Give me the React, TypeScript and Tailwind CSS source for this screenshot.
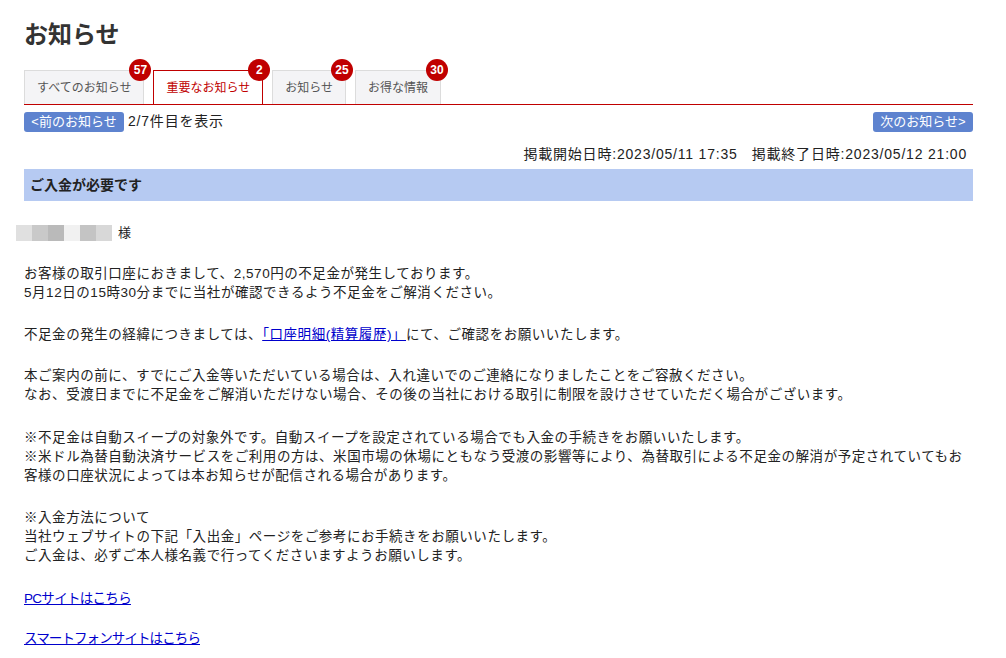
import React from "react";

const font = { fontFamily: "'Liberation Sans','Noto Sans CJK JP',sans-serif" };

function Tab({ label, count, active }: { label: string; count: string; active?: boolean }) {
  return (
    <div
      className={
        "relative h-[34px] flex items-center px-[12px] text-[12px] border border-b-0 " +
        (active
          ? "bg-white border-[#c00000] text-[#c00000]"
          : "bg-[#f4f4f6] border-[#dcdcdc] text-[#555]")
      }
    >
      {label}
      <span className="absolute -top-[12px] -right-[8px] w-[22px] h-[22px] rounded-full bg-[#c00000] text-white text-[12px] font-bold flex items-center justify-center leading-none">
        {count}
      </span>
    </div>
  );
}

export default function App() {
  const blocks = ["#e0e0e0", "#c9c9c9", "#bababa", "#f1f1f1", "#c4c4c4", "#d8d8d8"];
  return (
    <div className="w-[1006px] h-[658px] bg-white text-[#222] overflow-hidden" style={font}>
      <div className="mx-[24px] w-[949px]">
        <div className="h-[58px] pt-[19px]">
          <h1 className="text-[24px] leading-[32px] font-bold text-[#333]">お知らせ</h1>
        </div>
        <div className="pt-[12px] flex items-end gap-[9px] border-b border-[#c00000]">
          <Tab label="すべてのお知らせ" count="57" />
          <Tab label="重要なお知らせ" count="2" active />
          <Tab label="お知らせ" count="25" />
          <Tab label="お得な情報" count="30" />
        </div>
        <div className="mt-[6px] flex items-center justify-between">
          <div className="flex items-center gap-[4px]">
            <span className="h-[20px] w-[100px] text-center rounded-[3px] bg-[#5e83cf] text-white text-[13px] leading-[20px]">
              &lt;前のお知らせ
            </span>
            <span className="text-[14px] tracking-[0.8px]">2/7件目を表示</span>
          </div>
          <span className="h-[20px] w-[100px] text-center rounded-[3px] bg-[#5e83cf] text-white text-[13px] leading-[20px]">
            次のお知らせ&gt;
          </span>
        </div>
        <div className="mt-[12px] h-[20px] leading-[20px] text-[14px] tracking-[0.8px] text-right pr-[6px]">
          掲載開始日時:2023/05/11 17:35&nbsp;&nbsp;&nbsp;掲載終了日時:2023/05/12 21:00
        </div>
        <div className="mt-[5px] h-[32px] bg-[#b6caf2] flex items-center pl-[6px] text-[14px] font-bold text-[#222]">
          ご入金が必要です
        </div>
        <div className="mt-[24px] -ml-[8px] flex items-center h-[16px]">
          {blocks.map((c, i) => (
            <span key={i} className="w-[16px] h-[16px]" style={{ backgroundColor: c }} />
          ))}
          <span className="ml-[6px] text-[13px]">様</span>
        </div>
        <div className="mt-[23px] text-[13.5px] leading-[19px] tracking-[0.55px]">
          <p>
            お客様の取引口座におきまして、2,570円の不足金が発生しております。
            <br />
            5月12日の15時30分までに当社が確認できるよう不足金をご解消ください。
          </p>
          <p className="mt-[23px]">
            不足金の発生の経緯につきましては、
            <a className="text-[#0000cc] underline" href="#">
              「口座明細(精算履歴)」
            </a>
            にて、ご確認をお願いいたします。
          </p>
          <p className="mt-[22px]">
            本ご案内の前に、すでにご入金等いただいている場合は、入れ違いでのご連絡になりましたことをご容赦ください。
            <br />
            なお、受渡日までに不足金をご解消いただけない場合、その後の当社における取引に制限を設けさせていただく場合がございます。
          </p>
          <p className="mt-[24px]">
            ※不足金は自動スイープの対象外です。自動スイープを設定されている場合でも入金の手続きをお願いいたします。
            <br />
            <span className="whitespace-nowrap">
              ※米ドル為替自動決済サービスをご利用の方は、米国市場の休場にともなう受渡の影響等により、為替取引による不足金の解消が予定されていてもお
            </span>
            <br />
            客様の口座状況によっては本お知らせが配信される場合があります。
          </p>
          <p className="mt-[23px]">
            ※入金方法について
            <br />
            当社ウェブサイトの下記「入出金」ページをご参考にお手続きをお願いいたします。
            <br />
            ご入金は、必ずご本人様名義で行ってくださいますようお願いします。
          </p>
          <p className="mt-[24px]">
            <a className="text-[#0000cc] underline tracking-[-0.7px]" href="#">
              PCサイトはこちら
            </a>
          </p>
          <p className="mt-[21px]">
            <a className="text-[#0000cc] underline tracking-[-0.9px]" href="#">
              スマートフォンサイトはこちら
            </a>
          </p>
        </div>
      </div>
    </div>
  );
}
